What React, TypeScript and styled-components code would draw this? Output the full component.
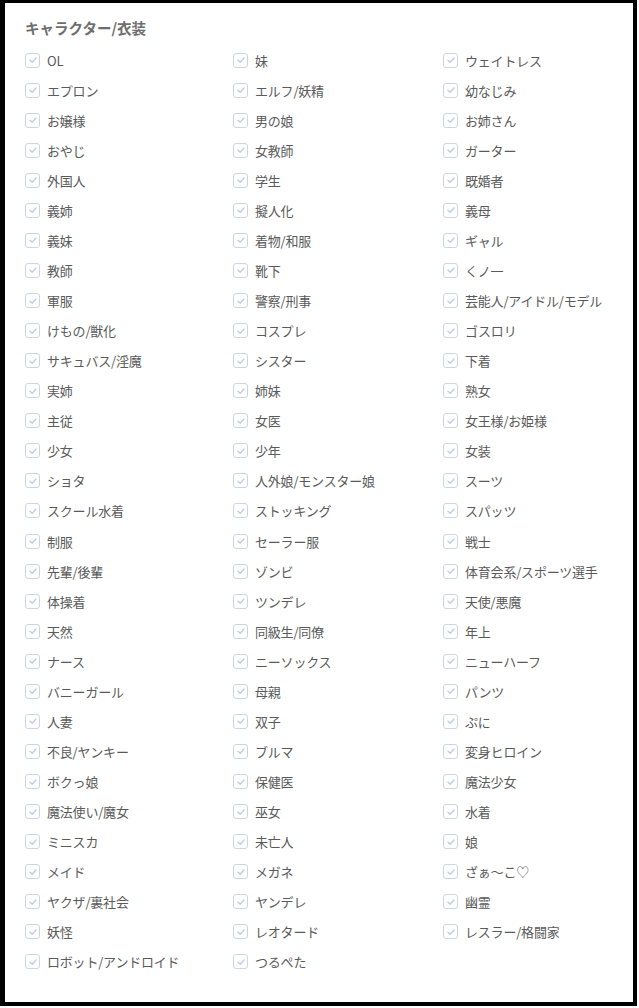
import React from "react";
import styled, { createGlobalStyle } from "styled-components";

const GlobalStyle = createGlobalStyle`
  html, body {
    margin: 0;
    padding: 0;
    background: #fff;
  }
  body {
    font-family: "Noto Sans CJK JP", "Noto Sans", sans-serif;
  }
`;

const tags = [
  "OL", "妹", "ウェイトレス",
  "エプロン", "エルフ/妖精", "幼なじみ",
  "お嬢様", "男の娘", "お姉さん",
  "おやじ", "女教師", "ガーター",
  "外国人", "学生", "既婚者",
  "義姉", "擬人化", "義母",
  "義妹", "着物/和服", "ギャル",
  "教師", "靴下", "くノ一",
  "軍服", "警察/刑事", "芸能人/アイドル/モデル",
  "けもの/獣化", "コスプレ", "ゴスロリ",
  "サキュバス/淫魔", "シスター", "下着",
  "実姉", "姉妹", "熟女",
  "主従", "女医", "女王様/お姫様",
  "少女", "少年", "女装",
  "ショタ", "人外娘/モンスター娘", "スーツ",
  "スクール水着", "ストッキング", "スパッツ",
  "制服", "セーラー服", "戦士",
  "先輩/後輩", "ゾンビ", "体育会系/スポーツ選手",
  "体操着", "ツンデレ", "天使/悪魔",
  "天然", "同級生/同僚", "年上",
  "ナース", "ニーソックス", "ニューハーフ",
  "バニーガール", "母親", "パンツ",
  "人妻", "双子", "ぷに",
  "不良/ヤンキー", "ブルマ", "変身ヒロイン",
  "ボクっ娘", "保健医", "魔法少女",
  "魔法使い/魔女", "巫女", "水着",
  "ミニスカ", "未亡人", "娘",
  "メイド", "メガネ", "ざぁ～こ♡",
  "ヤクザ/裏社会", "ヤンデレ", "幽霊",
  "妖怪", "レオタード", "レスラー/格闘家",
  "ロボット/アンドロイド", "つるぺた",
];

function CheckItem({ label }: { label: string }) {
  return (
    <Item>
      <Box>
        <svg width="10" height="10" viewBox="0 0 10 10">
          <polyline
            points="2,5.2 4.2,7.2 8,3"
            fill="none"
            stroke="#bfcbe0"
            strokeWidth="1.3"
            strokeLinecap="round"
            strokeLinejoin="round"
          />
        </svg>
      </Box>
      <Label>{label}</Label>
    </Item>
  );
}

function App() {
  return (
    <>
      <GlobalStyle />
      <Frame>
        <Title>キャラクター/衣装</Title>
        <Grid>
          {tags.map((t) => (
            <CheckItem key={t} label={t} />
          ))}
        </Grid>
      </Frame>
    </>
  );
}

const Frame = styled.div`
  box-sizing: border-box;
  width: 637px;
  height: 1006px;
  border-style: solid;
  border-color: #000;
  border-width: 3px 4px 4px 5px;
  padding: 15px 0 0 20px;
  overflow: hidden;
`;

const Title = styled.h2`
  margin: 0 0 7px;
  font-size: 14.5px;
  line-height: 20px;
  font-weight: 700;
  color: #6e6e6e;
`;

const Grid = styled.div`
  display: grid;
  grid-template-columns: 208px 210px 1fr;
  grid-auto-rows: 30.07px;
`;

const Item = styled.label`
  display: flex;
  align-items: center;
  gap: 7px;
`;

const Box = styled.span`
  box-sizing: border-box;
  width: 15px;
  height: 15px;
  border: 1px solid #cdd5e3;
  border-radius: 3px;
  background: #fff;
  display: flex;
  align-items: center;
  justify-content: center;
  flex-shrink: 0;
`;

const Label = styled.span`
  font-size: 13px;
  letter-spacing: -0.2px;
  color: #5a5a5a;
  white-space: nowrap;
`;

export default App;
